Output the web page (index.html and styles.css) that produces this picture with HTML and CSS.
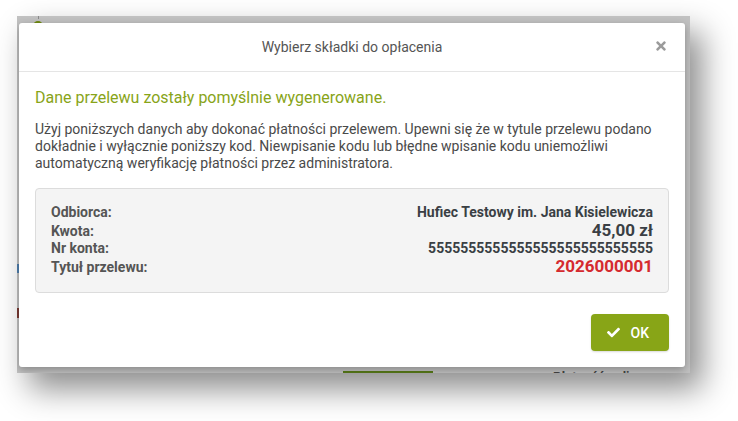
FILE: index.html
```html
<!DOCTYPE html>
<html lang="pl">
<head>
    <meta charset="UTF-8">
    <meta name="viewport" content="width=device-width, initial-scale=1.0">
    <title>Wybierz składki do opłacenia</title>
    <link rel="stylesheet" href="styles.css">
</head>
<body>
    <div class="shot">
        <div class="frame">
            <!-- page behind the overlay -->
            <span class="bg-step"></span>
            <span class="bg-step-line"></span>
            <span class="bg-mark bg-mark-blue"></span>
            <span class="bg-mark bg-mark-red"></span>
            <span class="bg-bar"></span>
            <span class="bg-label">Płatność online</span>

            <div class="modal">
                <div class="modal-header">
                    <h4 class="modal-title">Wybierz składki do opłacenia</h4>
                    <button class="close" title="Zamknij">
                        <svg viewBox="0 0 352 512" width="10" height="14"><path d="M242.72 256l100.07-100.07c12.28-12.28 12.28-32.19 0-44.48l-22.24-22.24c-12.28-12.28-32.19-12.28-44.48 0L176 189.28 75.93 89.21c-12.28-12.28-32.19-12.28-44.48 0L9.21 111.45c-12.28 12.28-12.28 32.19 0 44.48L109.28 256 9.21 356.07c-12.28 12.28-12.28 32.19 0 44.48l22.24 22.24c12.28 12.28 32.2 12.28 44.48 0L176 322.72l100.07 100.07c12.28 12.28 32.2 12.28 44.48 0l22.24-22.24c12.28-12.28 12.28-32.19 0-44.48L242.72 256z"/></svg>
                    </button>
                </div>
                <div class="modal-body">
                    <h3 class="success-title">Dane przelewu zostały pomyślnie wygenerowane.</h3>
                    <p class="info">Użyj poniższych danych aby dokonać płatności przelewem. Upewni się że w tytule przelewu podano dokładnie i wyłącznie poniższy kod. Niewpisanie kodu lub błędne wpisanie kodu uniemożliwi automatyczną weryfikację płatności przez administratora.</p>
                    <div class="well">
                        <div class="row"><span class="label">Odbiorca:</span><span class="value">Hufiec Testowy im. Jana Kisielewicza</span></div>
                        <div class="row"><span class="label">Kwota:</span><span class="value value-big">45,00 zł</span></div>
                        <div class="row"><span class="label">Nr konta:</span><span class="value">5555555555555555555555555555</span></div>
                        <div class="row"><span class="label">Tytuł przelewu:</span><span class="value value-big value-code">2026000001</span></div>
                    </div>
                </div>
                <div class="modal-footer">
                    <button class="btn-ok">
                        <svg viewBox="0 0 512 512" width="13" height="13"><path d="M173.898 439.404l-166.4-166.4c-9.997-9.997-9.997-26.206 0-36.204l36.203-36.204c9.997-9.998 26.207-9.998 36.204 0L192 312.69 432.095 72.596c9.997-9.997 26.207-9.997 36.204 0l36.203 36.204c9.997 9.997 9.997 26.206 0 36.204l-294.4 294.401c-9.998 9.997-26.207 9.997-36.204-.001z"/></svg>
                        OK
                    </button>
                </div>
            </div>
        </div>
    </div>
</body>
</html>
```

FILE: styles.css
```css
/* Common styles */
body {
    box-sizing: border-box;
    min-height: 100vh;
    margin: 0;
    padding: 16px 0 0 17px;
    background-color: #fff;
    font-family: Roboto, "Liberation Sans", sans-serif;
    color: #555;
}

/* Screenshot with its drop shadow */
.shot {
    width: 673px;
    height: 357px;
    background-color: #c1c1c1;
    box-shadow: 12px 16px 30px rgba(0, 0, 0, 0.45);
}

/* Darkened page with the modal on top */
.frame {
    position: relative;
    box-sizing: border-box;
    width: 673px;
    height: 357px;
    padding: 7px 5px 0 2px;
    background-color: #c1c1c1;
    overflow: hidden;
}

/* Bits of the page under the overlay */
.bg-step {
    position: absolute;
    left: 16px;
    top: 5px;
    width: 10px;
    height: 10px;
    border-radius: 50%;
    background-color: #6f8a10;
}

.bg-step-line {
    position: absolute;
    left: 21px;
    top: 0;
    width: 1px;
    height: 3px;
    background-color: #8a8a8a;
}

.bg-mark {
    position: absolute;
    left: 0;
    width: 2px;
}

.bg-mark-blue {
    top: 248px;
    height: 9px;
    background-color: #4f7fae;
}

.bg-mark-red {
    top: 292px;
    height: 10px;
    background-color: #7a3a33;
}

.bg-bar {
    position: absolute;
    left: 326px;
    top: 355px;
    width: 90px;
    height: 2px;
    background-color: #577a18;
}

.bg-label {
    position: absolute;
    left: 536px;
    top: 353px;
    font-size: 13px;
    font-weight: bold;
    color: #444;
}

/* Modal */
.modal {
    position: relative;
    height: 344px;
    background-color: #fff;
    border-radius: 3px;
    box-shadow: 0 3px 9px rgba(0, 0, 0, 0.3);
}

.modal-header {
    position: relative;
    display: flex;
    align-items: center;
    justify-content: center;
    height: 48px;
    border-bottom: 1px solid #e5e5e5;
}

.modal-title {
    margin: 0;
    font-size: 14px;
    font-weight: normal;
    color: #555;
}

.close {
    position: absolute;
    right: 19px;
    top: 16px;
    padding: 0;
    border: none;
    background: none;
    fill: #9b9b9b;
    cursor: pointer;
}

.modal-body {
    padding: 15px 16px 0;
}

.success-title {
    margin: 0;
    font-size: 16px;
    line-height: 22px;
    font-weight: normal;
    color: #88a419;
}

.info {
    margin: 12px 0 16px;
    font-size: 14px;
    line-height: 17px;
    color: #4a4a4a;
}

/* Transfer data box */
.well {
    padding: 14px 15px 17px;
    background-color: #f4f4f4;
    border: 1px solid #dcdcdc;
    border-radius: 4px;
}

.row {
    display: flex;
    justify-content: space-between;
    align-items: baseline;
    height: 18px;
    line-height: 18px;
}

.label {
    font-size: 14px;
    font-weight: bold;
    color: #555;
}

.value {
    font-size: 14px;
    font-weight: bold;
    color: #3a3f44;
}

.value-big {
    font-size: 17px;
}

.value-code {
    color: #d52a2f;
}

.modal-footer {
    display: flex;
    justify-content: flex-end;
    padding: 21px 16px 16px;
}

.btn-ok {
    display: flex;
    align-items: center;
    gap: 11px;
    height: 37px;
    padding: 0 20px 0 16px;
    border: none;
    border-radius: 4px;
    background-color: #88a517;
    box-shadow: 0 1px 2px rgba(0, 0, 0, 0.15);
    color: #fff;
    fill: #fff;
    font-family: Roboto, "Liberation Sans", sans-serif;
    font-size: 14px;
    font-weight: 500;
    cursor: pointer;
}
```
